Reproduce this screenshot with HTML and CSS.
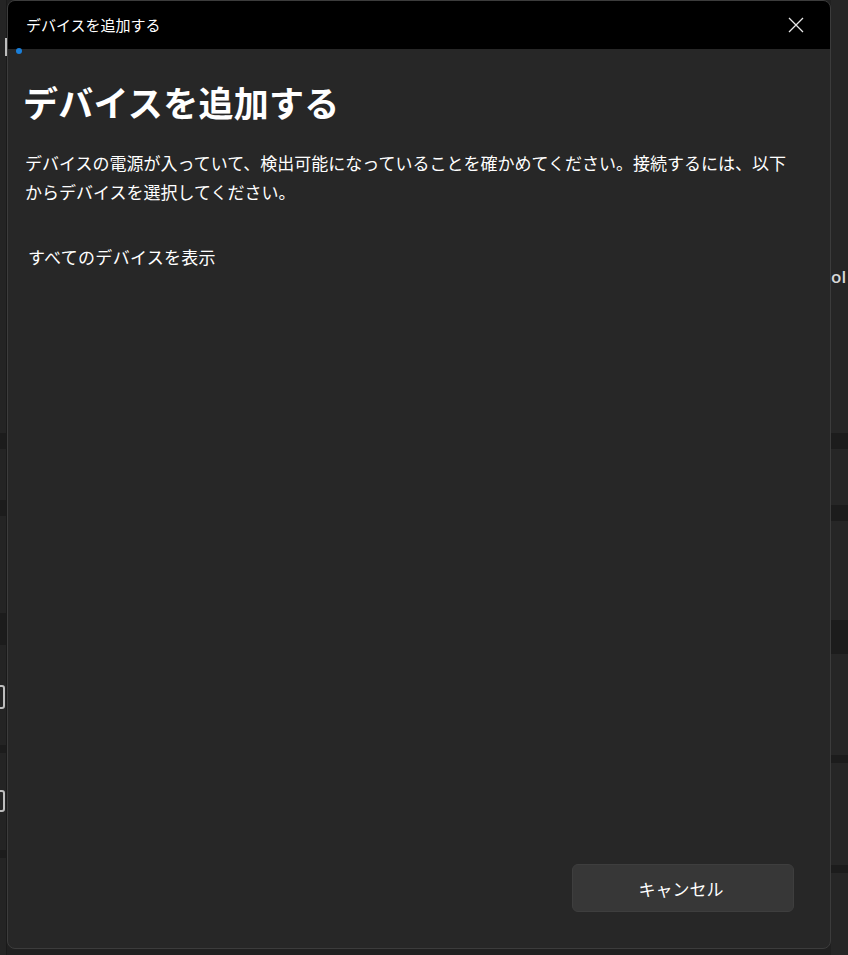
FILE: index.html
```html
<!DOCTYPE html>
<html lang="ja">
<head>
<meta charset="utf-8">
<title>デバイスを追加する</title>
<link rel="stylesheet" href="styles.css">
</head>
<body>
<div class="screen">
  <div class="bg-left">
    <div class="bl-glyph"></div>
    <div class="band b1"></div>
    <div class="band b2"></div>
    <div class="band b3"></div>
    <div class="bl-icon i1"></div>
    <div class="band b4"></div>
    <div class="bl-icon i2"></div>
    <div class="band b5"></div>
  </div>
  <div class="dialog">
    <div class="titlebar">
      <span class="title">デバイスを追加する</span>
      <button class="close" aria-label="閉じる">
        <svg width="16" height="16" viewBox="0 0 16 16"><path d="M1 1 L15 15 M15 1 L1 15" stroke="#e8e8e8" stroke-width="1.3" fill="none"/></svg>
      </button>
    </div>
    <span class="dot"></span>
    <div class="content">
      <h1 class="heading">デバイスを追加する</h1>
      <p class="desc">デバイスの電源が入っていて、検出可能になっていることを確かめてください。接続するには、以下からデバイスを選択してください。</p>
      <p class="showall">すべてのデバイスを表示</p>
    </div>
    <div class="footer">
      <button class="cancel">キャンセル</button>
    </div>
  </div>
  <div class="bg-right">
    <div class="br-text">ol</div>
    <div class="band r1"></div>
    <div class="band r2"></div>
    <div class="band r3"></div>
    <div class="band r4"></div>
    <div class="band r5"></div>
  </div>
</div>
</body>
</html>
```

FILE: styles.css
```css
* { box-sizing: border-box; }
html, body {
  margin: 0;
  padding: 0;
  background: #202020;
  font-family: "Noto Sans CJK JP", "Noto Sans", sans-serif;
  color: #ffffff;
}
.screen {
  width: 848px;
  height: 955px;
  display: flex;
  overflow: hidden;
}
.bg-left {
  width: 7px;
  flex: none;
  position: relative;
  background: #242424;
  border-right: 1px solid #1a1a1a;
}
.bg-right {
  flex: 1;
  position: relative;
  background: #262626;
}
.band {
  position: absolute;
  left: 0;
  right: 0;
  background: #1c1c1c;
}
.bl-glyph {
  position: absolute;
  left: 5px;
  top: 38px;
  width: 2px;
  height: 18px;
  background: #bdbdbd;
}
.b1 { top: 433px; height: 16px; }
.b2 { top: 500px; height: 16px; }
.b3 { top: 613px; height: 32px; }
.b4 { top: 745px; height: 8px; }
.b5 { top: 850px; height: 8px; }
.bl-icon {
  position: absolute;
  left: -6px;
  width: 11px;
  height: 24px;
  border: 2px solid #bdbdbd;
  border-radius: 3px;
}
.i1 { top: 685px; }
.i2 { top: 790px; height: 22px; }
.br-text {
  position: absolute;
  left: 0;
  top: 265px;
  font-family: "Open Sans", "Noto Sans", sans-serif;
  font-weight: 600;
  font-size: 17px;
  color: #d8d8d8;
  line-height: 24px;
}
.r1 { top: 433px; height: 16px; }
.r2 { top: 505px; height: 16px; }
.r3 { top: 620px; height: 34px; }
.r4 { top: 755px; height: 8px; }
.r5 { top: 865px; height: 8px; }

.dialog {
  position: relative;
  width: 824px;
  height: 949px;
  flex: none;
  display: flex;
  flex-direction: column;
  background: #272727;
  border: 1px solid #3c3c3c;
  border-radius: 8px;
  overflow: hidden;
  z-index: 2;
}
.titlebar {
  height: 48px;
  flex: none;
  background: #000000;
  display: flex;
  align-items: center;
  justify-content: space-between;
  padding: 0 26px 0 18px;
}
.title {
  font-size: 15px;
  color: #ffffff;
  line-height: 20px;
}
.close {
  background: none;
  border: 0;
  padding: 0;
  width: 16px;
  height: 16px;
  display: flex;
}
.dot {
  position: absolute;
  left: 8px;
  top: 47px;
  width: 6px;
  height: 6px;
  border-radius: 50%;
  background: #1a7fd9;
}
.content {
  flex: 1;
  padding: 30px 30px 0 17px;
}
.heading {
  margin: 0 0 0 -2px;
  font-size: 35px;
  font-weight: 600;
  line-height: 46px;
  letter-spacing: 0.3px;
}
.desc {
  margin: 23px 0 0 0;
  font-size: 17px;
  line-height: 29px;
  width: 775px;
}
.showall {
  margin: 36px 0 0 3px;
  font-size: 17px;
  line-height: 29px;
  letter-spacing: 0.3px;
}
.footer {
  flex: none;
  display: flex;
  justify-content: flex-end;
  padding: 0 36px 36px 0;
}
.cancel {
  width: 222px;
  height: 48px;
  border-radius: 6px;
  background: #373737;
  border: 1px solid #3e3e3e;
  color: #ffffff;
  font-family: "Noto Sans CJK JP", "Noto Sans", sans-serif;
  font-size: 17px;
  padding: 0 4px 0 0;
}
```
